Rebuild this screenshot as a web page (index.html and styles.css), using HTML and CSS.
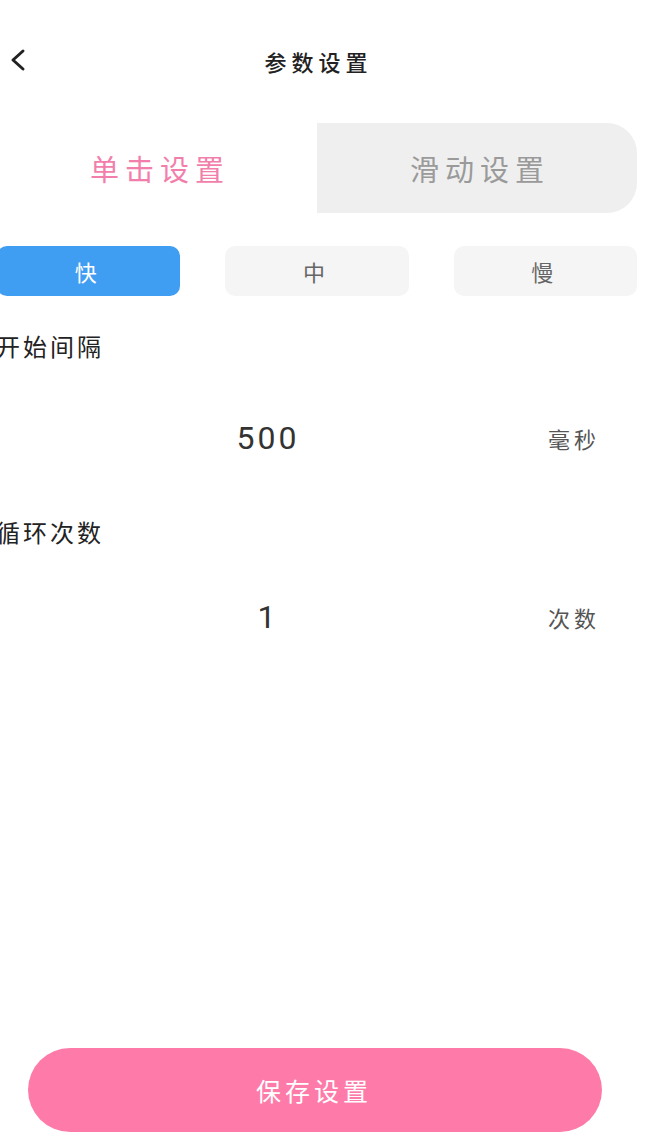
FILE: index.html
```html
<!DOCTYPE html>
<html lang="zh-CN">
<head>
    <meta charset="UTF-8">
    <meta name="viewport" content="width=device-width, initial-scale=1.0">
    <title>参数设置</title>
    <link rel="stylesheet" href="styles.css">
</head>
<body>
    <div class="page">
        <header class="nav">
            <button class="nav-back" aria-label="返回">
                <svg width="18" height="24" viewBox="0 0 18 24">
                    <polyline points="14,3 4,12 14,21" fill="none" stroke="#222" stroke-width="3" stroke-linecap="round" stroke-linejoin="round"/>
                </svg>
            </button>
            <h1 class="nav-title">参数设置</h1>
        </header>

        <div class="mode-tabs">
            <div class="mode-tab active">单击设置</div>
            <div class="mode-tab">滑动设置</div>
        </div>

        <div class="speed-group">
            <button class="speed active">快</button>
            <button class="speed">中</button>
            <button class="speed">慢</button>
        </div>

        <div class="field">
            <div class="field-label">开始间隔</div>
            <div class="field-row">
                <input class="field-input" type="text" value="500">
                <span class="field-unit">毫秒</span>
            </div>
        </div>

        <div class="field">
            <div class="field-label">循环次数</div>
            <div class="field-row">
                <input class="field-input" type="text" value="1">
                <span class="field-unit">次数</span>
            </div>
        </div>

        <button class="save">保存设置</button>
    </div>
</body>
</html>
```

FILE: styles.css
```css
body {
    margin: 0;
    background: #fff;
    overflow-x: hidden;
    font-family: Roboto, "Noto Sans CJK SC", sans-serif;
    color: #222;
}
.page {
    width: 640px;
    margin-left: -3px;
    min-height: 1137px;
    display: flex;
    flex-direction: column;
}
.nav {
    height: 123px;
    display: grid;
    grid-template-columns: 1fr auto 1fr;
    align-items: center;
    padding-left: 12px;
    padding-bottom: 2px;
    box-sizing: border-box;
}
.nav-back {
    justify-self: start;
    margin-top: -2px;
    padding: 0;
    border: none;
    background: none;
    display: flex;
}
.nav-title {
    margin: 0 0 0 -14px;
    font-size: 22px;
    font-weight: 500;
    letter-spacing: 5px;
    padding-left: 5px;
    color: #222;
}
.mode-tabs {
    display: flex;
    height: 90px;
}
.mode-tab {
    flex: 1;
    display: flex;
    align-items: center;
    justify-content: center;
    font-size: 29px;
    letter-spacing: 6px;
    padding-left: 6px;
    color: #9a9a9a;
    background: #efefef;
    border-radius: 0 30px 30px 0;
}
.mode-tab.active {
    color: #f27fab;
    background: #fff;
    border-radius: 0;
}
.speed-group {
    display: flex;
    gap: 45px;
    margin-top: 33px;
}
.speed {
    flex: 1;
    height: 50px;
    border: none;
    border-radius: 10px;
    background: #f5f5f5;
    color: #666;
    font-family: inherit;
    font-size: 22px;
    letter-spacing: 5px;
    padding-left: 5px;
}
.speed.active {
    background: #3f9df2;
    color: #fff;
}
.field-label {
    margin-top: 34px;
    margin-left: -1px;
    font-size: 24px;
    line-height: 36px;
    letter-spacing: 3px;
    color: #222;
}
.field + .field .field-label {
    margin-top: 38px;
}
.field-row {
    display: flex;
    align-items: center;
    height: 80px;
    margin-top: 32px;
    padding-right: 29px;
}
.field + .field .field-row {
    margin-top: 25px;
}
.field-input {
    flex: 1;
    min-width: 0;
    border: none;
    outline: none;
    background: transparent;
    text-align: center;
    font-family: inherit;
    font-size: 32px;
    letter-spacing: 3px;
    text-indent: 3px;
    color: #333;
}
.field-unit {
    width: 72px;
    text-align: center;
    font-size: 22px;
    letter-spacing: 4px;
    padding-left: 4px;
    box-sizing: border-box;
    color: #555;
}
.save {
    margin: auto 35px 5px 31px;
    height: 84px;
    border: none;
    border-radius: 42px;
    background: #fe7ba9;
    color: #fff;
    font-family: inherit;
    font-size: 25px;
    letter-spacing: 4px;
    padding-left: 4px;
}
```
